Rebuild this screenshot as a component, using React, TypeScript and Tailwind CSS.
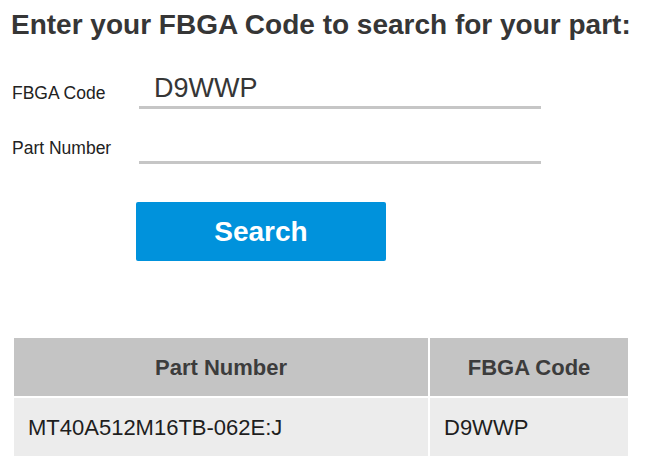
export default function App() {
  return (
    <main className="min-h-screen bg-white px-[11px] pt-[8px] font-['Liberation_Sans',Arial,sans-serif] text-[#222]">
      <h1 className="text-[28px] leading-[34px] font-bold text-[#363636] whitespace-nowrap">
        Enter your FBGA Code to search for your part:
      </h1>

      <form className="mt-[29px] flex flex-col gap-[17px]" onSubmit={(e) => e.preventDefault()}>
        <div className="flex items-center">
          <label className="mt-[6px] w-[128px] pl-[1px] text-[17.5px] text-[#222]">FBGA Code</label>
          <input
            defaultValue="D9WWP"
            className="h-[38px] w-[402px] border-b-[3px] border-[#c6c6c6] pl-[15px] text-[27px] text-[#363636] outline-none"
          />
        </div>
        <div className="flex items-center">
          <label className="mt-[6px] w-[128px] pl-[1px] text-[17.5px] text-[#222]">Part Number</label>
          <input className="h-[38px] w-[402px] border-b-[3px] border-[#c6c6c6] pl-[15px] text-[27px] text-[#363636] outline-none" />
        </div>
        <div className="mt-[21px] pl-[125px]">
          <button
            type="submit"
            className="h-[59px] w-[250px] rounded-[2px] bg-[#0092dc] text-[28px] font-bold text-white"
          >
            Search
          </button>
        </div>
      </form>

      <div className="mt-[77px] ml-[3px] grid w-[614px] grid-cols-[414px_198px] gap-[2px] text-[22px]">
        <div className="flex h-[58px] items-center justify-center bg-[#c4c4c4] font-bold text-[#3c3c3c]">
          Part Number
        </div>
        <div className="flex h-[58px] items-center justify-center bg-[#c4c4c4] font-bold text-[#3c3c3c]">
          FBGA Code
        </div>
        <div className="flex h-[58px] items-center bg-[#ececec] pl-[14px] text-[#1e1e1e]">
          MT40A512M16TB-062E:J
        </div>
        <div className="flex h-[58px] items-center bg-[#ececec] pl-[14px] text-[#1e1e1e]">
          D9WWP
        </div>
      </div>
    </main>
  );
}
